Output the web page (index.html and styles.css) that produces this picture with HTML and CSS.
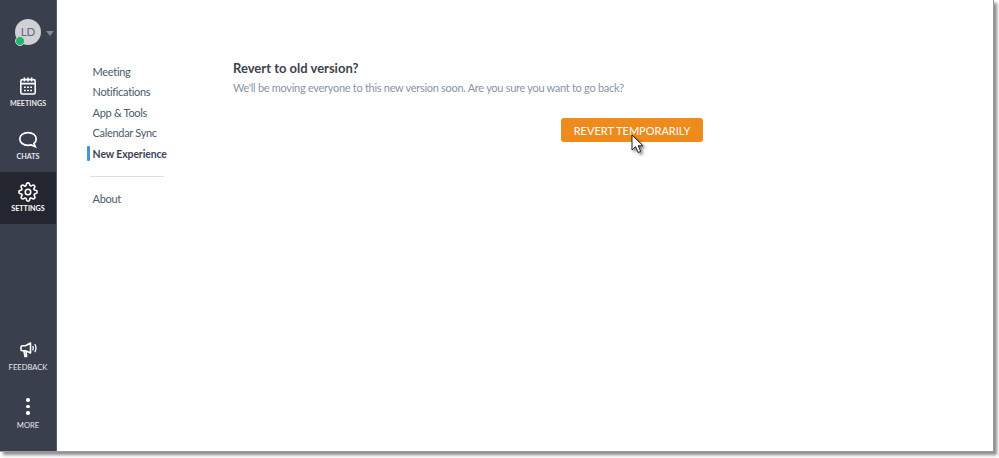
FILE: index.html
```html
<!DOCTYPE html>
<html lang="en">
<head>
  <meta charset="UTF-8">
  <title>Settings</title>
  <link rel="stylesheet" href="styles.css">
</head>
<body>
  <div class="window">
    <!-- Main nav -->
    <div class="sidebar">
      <div class="profile">
        <div class="avatar">LD<span class="status"></span></div>
        <span class="caret"></span>
      </div>
      <a class="nav-item nav-meetings">
        <svg width="20" height="20" viewBox="0 0 20 20" fill="none" stroke="#fff" stroke-width="1.6">
          <rect x="2.8" y="3.6" width="14.4" height="14.4" rx="1.6"/>
          <path d="M2.8 7.6h14.4M6.4 1.4v4M10 1.4v4M13.6 1.4v4"/>
          <path d="M6 11.2h1.8M9.1 11.2h1.8M12.2 11.2h1.8M6 14.4h1.8M9.1 14.4h1.8M12.2 14.4h1.8" stroke-width="1.5"/>
        </svg>
        <span>MEETINGS</span>
      </a>
      <a class="nav-item nav-chats">
        <svg width="20" height="20" viewBox="0 0 20 20" fill="none" stroke="#fff" stroke-width="1.7">
          <path d="M10 2.6c4.8 0 8.2 2.7 8.2 6.4 0 1.900-.9 3.500-2.300 4.600l1.300 3-4-1.700c-1 .3-2 .4-3.200.4-4.700 0-8.200-2.700-8.200-6.300S5.300 2.600 10 2.600z"/>
        </svg>
        <span>CHATS</span>
      </a>
      <a class="nav-item nav-settings active">
        <svg width="20" height="20" viewBox="0 0 24 24" fill="none" stroke="#fff" stroke-width="1.9" stroke-linejoin="round">
          <circle cx="12" cy="12" r="3.300"/>
          <path d="M19.400 15a1.650 1.650 0 0 0 .33 1.820l.06.06a2 2 0 1 1-2.830 2.830l-.06-.06a1.650 1.650 0 0 0-2.820 1.170V21a2 2 0 1 1-4 0v-.09A1.650 1.650 0 0 0 7.260 19.700l-.06.06a2 2 0 1 1-2.830-2.830l.06-.06a1.650 1.650 0 0 0-1.170-2.820H3a2 2 0 1 1 0-4h.09A1.650 1.650 0 0 0 4.300 7.260l-.06-.06a2 2 0 1 1 2.830-2.830l.06.06a1.650 1.650 0 0 0 2.820-1.170V3a2 2 0 1 1 4 0v.09a1.650 1.650 0 0 0 2.790 1.170l.06-.06a2 2 0 1 1 2.830 2.830l-.06.06a1.650 1.650 0 0 0 1.170 2.820H21a2 2 0 1 1 0 4h-.09a1.650 1.650 0 0 0-1.510 1.090z"/>
        </svg>
        <span>SETTINGS</span>
      </a>
      <a class="nav-item nav-feedback">
        <svg width="17" height="18" viewBox="0 0 17 18" fill="none" stroke="#fff" stroke-width="1.600" stroke-linejoin="round">
          <path d="M10.500 2v10L5.500 9.800H2.400C1.500 9.800 1 9.200 1 8.400V6.200c0-.8.5-1.400 1.400-1.400h3.100z"/>
          <path d="M4 10l1 5.500h1.600L6 10.400"/>
          <path d="M12.600 5c.8 1.300.8 3 0 4.300M14.800 3.200c1.400 2.400 1.400 5.500 0 7.900" stroke-width="1.300"/>
        </svg>
        <span>FEEDBACK</span>
      </a>
      <a class="nav-item nav-more">
        <div class="dots"><i></i><i></i><i></i></div>
        <span>MORE</span>
      </a>
    </div>

    <!-- Settings tabs -->
    <ul class="tabs">
      <li>Meeting</li>
      <li>Notifications</li>
      <li>App &amp; Tools</li>
      <li>Calendar Sync</li>
      <li class="current">New Experience</li>
      <li class="divider"></li>
      <li>About</li>
    </ul>

    <div class="content">
      <h2>Revert to old version?</h2>
      <p>We'll be moving everyone to this new version soon. Are you sure you want to go back?</p>
      <div class="actions">
        <button class="revert">REVERT TEMPORARILY</button>
        <svg class="cursor" width="16" height="22" viewBox="0 0 16 22">
          <path d="M1 1v15l3.600-3.300 2.500 5.800 2.600-1.100-2.500-5.600H12z" fill="#fff" stroke="#222" stroke-width="1" stroke-linejoin="round"/>
        </svg>
      </div>
    </div>
  </div>
</body>
</html>
```

FILE: styles.css
```css
* {
  box-sizing: border-box;
}
html, body {
  margin: 0;
  padding: 0;
  background: #fff;
  overflow: hidden;
}
body {
  width: 999px;
  height: 458px;
  font-family: Lato, "Open Sans", sans-serif;
}
.window {
  display: flex;
  width: 994px;
  height: 452px;
  background: #fff;
  border-right: 1px solid #9a9a9a;
  border-bottom: 1px solid #9a9a9a;
  box-shadow: 3px 3px 3px #8c8c8c;
}
.sidebar {
  display: flex;
  flex-direction: column;
  width: 57px;
  flex-shrink: 0;
  padding-bottom: 4px;
  background: #3a3f4e;
  border-right: 1px solid #5a5f6c;
}
.profile {
  position: relative;
  height: 68px;
  padding: 19px 0 0 15px;
}
.avatar {
  position: relative;
  width: 26px;
  height: 26px;
  border-radius: 50%;
  background: #d0d1d4;
  color: #666b78;
  font-size: 11.500px;
  line-height: 26px;
  text-align: center;
}
.status {
  position: absolute;
  left: 0;
  bottom: -1px;
  width: 10px;
  height: 10px;
  border-radius: 50%;
  background: #23b36f;
  border: 1.500px solid #d0d1d4;
}
.caret {
  position: absolute;
  left: 46px;
  top: 31px;
  border-left: 4px solid transparent;
  border-right: 4px solid transparent;
  border-top: 5px solid #858994;
}
.nav-item {
  display: flex;
  flex-direction: column;
  align-items: center;
  height: 52px;
  padding-top: 10px;
  color: #e6e7ea;
  font-size: 7.200px;
  font-weight: 700;
}
.nav-item span {
  margin-top: 2px;
}
.nav-meetings {
  padding-top: 8px;
}
.nav-meetings span {
  margin-top: 3px;
}
.nav-item.active {
  background: #24262f;
  color: #fff;
}
.nav-feedback {
  margin-top: auto;
  height: 58px;
  padding-top: 10px;
  font-size: 7.600px;
  font-weight: 400;
}
.nav-feedback span {
  margin-top: 3px;
}
.nav-more {
  height: 58px;
  padding-top: 8px;
  font-size: 7.600px;
  font-weight: 400;
}
.nav-more span {
  margin-top: 3px;
}
.dots {
  display: flex;
  flex-direction: column;
  gap: 3px;
  height: 20px;
  padding-top: 1px;
}
.dots i {
  display: block;
  width: 3.500px;
  height: 3.500px;
  border-radius: 50%;
  background: #fff;
}
.tabs {
  list-style: none;
  margin: 0;
  padding: 61.700px 0 0 30px;
  width: 176px;
  flex-shrink: 0;
  color: #4b5a6b;
  font-size: 11px;
  letter-spacing: -0.32px;
}
.tabs li {
  position: relative;
  height: 20.500px;
  line-height: 20px;
  padding-left: 5.600px;
}
.tabs .current {
  color: #3d4657;
  font-weight: 700;
  font-size: 10.500px;
  letter-spacing: -0.13px;
}
.tabs .current::before {
  content: "";
  position: absolute;
  left: 0;
  top: 2px;
  width: 3px;
  height: 15px;
  border-radius: 1px;
  background: #3f97dc;
}
.tabs .divider {
  height: 1px;
  width: 74px;
  margin: 11.500px 0 12px 3px;
  padding: 0;
  background: #dfe0e2;
}
.content {
  flex: 1;
  padding-top: 60px;
}
.content h2 {
  margin: 0;
  color: #3d4250;
  font-size: 13px;
  font-weight: 700;
  line-height: 17px;
}
.content p {
  margin: 3px 0 0;
  color: #8a94a6;
  font-size: 11px;
  letter-spacing: -0.29px;
  line-height: 15px;
}
.actions {
  position: relative;
  display: flex;
  margin: 23px 0 0 328px;
}
.revert {
  width: 142px;
  height: 24px;
  padding: 0;
  border: none;
  border-radius: 3px;
  background: #ef8a1d;
  color: #fff;
  font-family: inherit;
  font-size: 11px;
}
.cursor {
  position: absolute;
  left: 70px;
  top: 16px;
  filter: drop-shadow(2px 2px 1.500px rgba(0, 0, 0, 0.5));
}
```
